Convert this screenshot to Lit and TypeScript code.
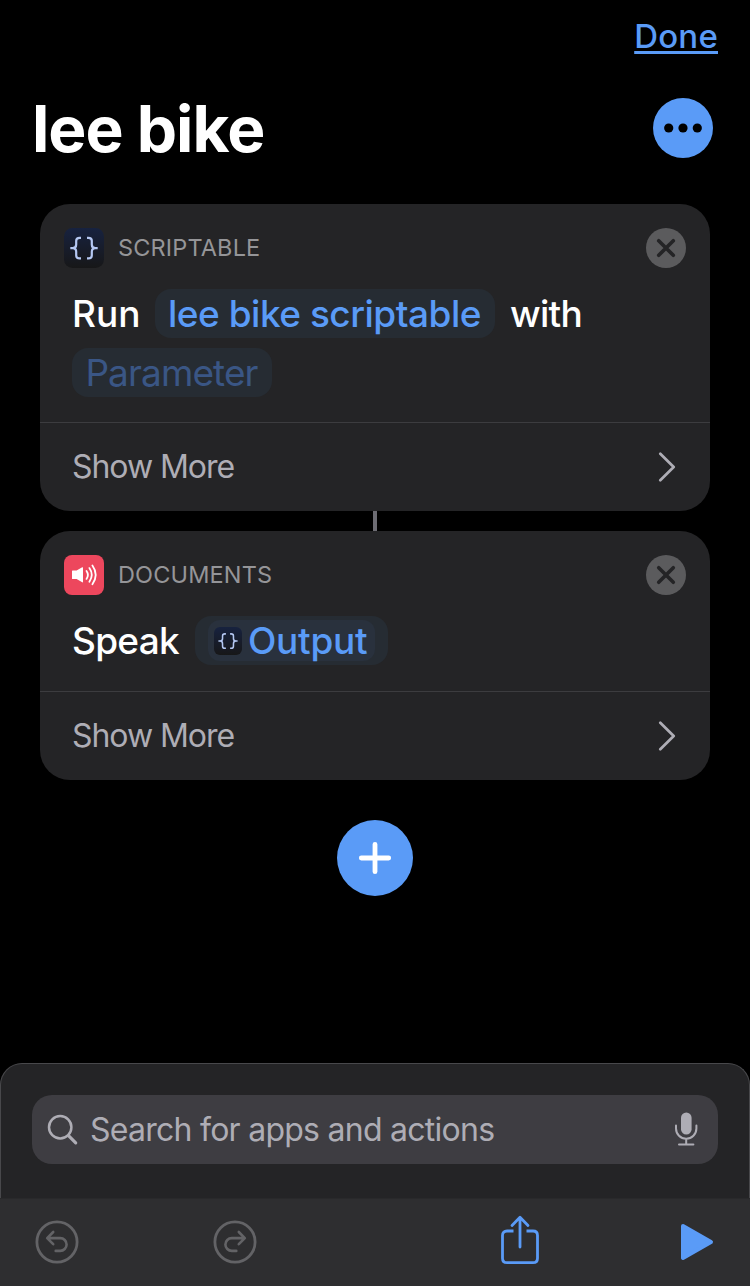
import { LitElement, html, css, svg } from "lit";
import { customElement, property } from "lit/decorators.js";

const bracesIcon = html`<svg class="fill" viewBox="0 0 40 40">
  <defs>
    <linearGradient id="night" x1="0" y1="0" x2="0" y2="1">
      <stop offset="0" stop-color="#17223f" />
      <stop offset="1" stop-color="#171718" />
    </linearGradient>
  </defs>
  <rect width="40" height="40" rx="8.5" fill="url(#night)" />
  <g fill="none" stroke="#b4c7f2" stroke-width="2.2">
    <path d="M17 9.8H15.6Q12.2 9.8 12.2 12.8V16.6Q12.2 20.1 8.8 20.1H6.3H8.8Q12.2 20.1 12.2 23.8V27.4Q12.2 30.4 15.6 30.4H17" />
    <path d="M23 9.8H24.4Q27.8 9.8 27.8 12.8V16.6Q27.8 20.1 31.2 20.1H33.7H31.2Q27.8 20.1 27.8 23.8V27.4Q27.8 30.4 24.4 30.4H23" />
  </g>
</svg>`;

const speakerIcon = html`<svg class="fill" viewBox="0 0 40 40">
  <rect width="40" height="40" rx="8" fill="#ed475d" />
  <path d="M8.5 15.5H12.6L18.2 12.2Q19 11.9 19 12.8V26.8Q19 27.7 18.2 27.3L12.6 24H8.5Q8 24 8 23.5V16Q8 15.5 8.5 15.5Z" fill="#fff" />
  <g fill="none" stroke="#fff" stroke-width="1.8" stroke-linecap="round">
    <path d="M22.5 15.9Q25.3 19.8 22.5 23.9" />
    <path d="M25.4 13.1Q30.1 19.8 25.4 26.7" />
    <path d="M28.4 10.5Q35 19.8 28.4 29.3" />
  </g>
</svg>`;

@customElement("action-card")
class ActionCard extends LitElement {
  @property() label = "";

  static styles = css`
    :host { display: block; background: #242426; border-radius: 30px; }
    .head { display: flex; align-items: center; padding: 24px 24px 0; height: 40px; }
    .icon { width: 40px; height: 40px; margin-right: 14px; }
    .label { flex: 1; font-size: 23.5px; letter-spacing: 0.15px; line-height: 40px; color: #959598; }
    .close { width: 40px; height: 40px; display: block; }
    .more {
      display: flex; align-items: center; justify-content: space-between;
      border-top: 1px solid #3c3c3f; height: 88px; padding: 0 34px 0 32px;
      font-size: 32px; letter-spacing: -1.05px; color: #aeadb5;
    }
    .more span { line-height: 40px; }
    .chevron { width: 18px; height: 30px; display: block; }
  `;

  render() {
    return html`
      <div class="head">
        <div class="icon"><slot name="icon"></slot></div>
        <div class="label">${this.label}</div>
        <svg class="close" viewBox="0 0 40 40">
          <circle cx="20" cy="20" r="20" fill="#5b5b5d" />
          <path d="M12.7 12.7L27.3 27.3M27.3 12.7L12.7 27.3" stroke="#242426" stroke-width="3.6" stroke-linecap="round" />
        </svg>
      </div>
      <slot></slot>
      <div class="more">
        <span>Show More</span>
        <svg class="chevron" viewBox="0 0 18 30">
          <path d="M2.3 1.7L15.7 15L2.3 28.3" fill="none" stroke="#aeadb5" stroke-width="2.7" stroke-linecap="round" stroke-linejoin="round" />
        </svg>
      </div>
    `;
  }
}

const turnArrow = svg`
  <circle cx="22" cy="22" r="20.1" stroke-width="2.8" />
  <path d="M18.2 12L12.2 18.1L18.2 24.2M12.5 18.1H25.2A6.4 6.4 0 0 1 25.2 30.9H20.7" stroke-width="2.6" />`;

@customElement("app-root")
class AppRoot extends LitElement {
  static styles = css`
    :host {
      display: flex; flex-direction: column; box-sizing: border-box;
      width: 750px; height: 1286px; overflow: hidden; background: #000; color: #fff;
      font-family: Inter, "Liberation Sans", sans-serif;
    }
    svg { display: block; }
    .fill { width: 100%; height: 100%; }
    .nav { display: flex; justify-content: flex-end; height: 72px; padding-right: 32px; }
    .done {
      height: 54px; margin-top: 18px; line-height: 36px; font-size: 33px; font-weight: 500;
      letter-spacing: 0.2px; color: #5a9bf7; text-decoration: underline;
      text-decoration-thickness: 3px; text-underline-offset: 3px; text-decoration-skip-ink: none;
    }
    .title-row { display: flex; align-items: center; justify-content: space-between; height: 112px; padding: 0 37px 20px 32px; }
    .title { margin: 0; padding-top: 2px; font-size: 64px; line-height: 80px; font-weight: 700; letter-spacing: -1px; }
    .dots { width: 60px; height: 60px; }
    .flow { display: flex; flex-direction: column; align-items: stretch; padding: 0 40px; flex: 1; }
    .link { width: 4px; height: 20px; background: #6d6c73; align-self: center; }
    .line { display: flex; align-items: center; height: 49px; font-size: 37px; font-weight: 500; letter-spacing: -0.48px; white-space: nowrap; padding-left: 32px; }
    .line.first { margin-top: 21px; }
    .line.second { margin-top: 10px; }
    .line.last { margin-bottom: 25px; }
    .line.only { margin-bottom: 26px; }
    .run { width: 83px; letter-spacing: 0; }
    .speak { width: 123px; letter-spacing: -0.7px; }
    .with { letter-spacing: -0.7px; }
    .pill {
      display: flex; align-items: center; justify-content: center; box-sizing: border-box;
      height: 49px; border-radius: 16px; background: #262c33; color: #5a9bf7;
    }
    .script { width: 340px; margin-right: 15px; padding-right: 1px; }
    .param { width: 200px; padding-right: 1px; color: #3a5685; font-weight: 400; letter-spacing: -0.9px; }
    .output { width: 193px; letter-spacing: -0.25px; }
    .token { display: flex; align-items: center; box-sizing: border-box; width: 167px; height: 41px; padding-left: 6px; border-radius: 12px; background: #29313d; }
    .mini { width: 28px; height: 28px; margin-right: 6px; }
    .add { width: 76px; height: 76px; margin-top: 40px; align-self: center; }
    .sheet { box-sizing: border-box; height: 135px; padding: 31px 31px 0; background: #242426; border: 1px solid #48484b; border-bottom: 0; border-radius: 22px 22px 0 0; }
    .search { display: flex; align-items: center; height: 69px; border-radius: 20px; background: #3e3d42; padding: 0 20px 0 15px; }
    .glass { width: 32px; height: 32px; margin-right: 11px; }
    .hint { flex: 1; padding-top: 1px; line-height: 40px; font-size: 32px; letter-spacing: -0.74px; color: #aeadb5; }
    .mic { width: 24px; height: 36px; margin-bottom: 1px; }
    .toolbar { display: flex; align-items: center; box-sizing: border-box; height: 88px; padding: 0 36px 2px 34px; background: #2e2e30; border-top: 1px solid #29292b; }
    .turn { width: 44px; height: 44px; fill: none; stroke: #636366; stroke-linecap: round; stroke-linejoin: round; }
    .turn:first-child { margin-left: 0.5px; }
    .redo { margin-left: 134px; }
    .share { width: 40px; height: 50px; margin: 0 0 3px 243px; }
    .play { width: 34px; height: 38px; margin-left: auto; }
  `;

  render() {
    return html`
      <div class="nav"><span class="done">Done</span></div>
      <div class="title-row">
        <h1 class="title">lee bike</h1>
        <svg class="dots" viewBox="0 0 60 60">
          <circle cx="30" cy="30" r="30" fill="#5a9bf7" />
          <circle cx="15.7" cy="30" r="4.6" /><circle cx="30" cy="30" r="4.6" /><circle cx="44.3" cy="30" r="4.6" />
        </svg>
      </div>
      <div class="flow">
        <action-card label="SCRIPTABLE">
          <div class="fill" slot="icon">${bracesIcon}</div>
          <div class="line first"><span class="run">Run</span><span class="pill script">lee bike scriptable</span><span class="with">with</span></div>
          <div class="line second last"><span class="pill param">Parameter</span></div>
        </action-card>
        <div class="link"></div>
        <action-card label="DOCUMENTS">
          <div class="fill" slot="icon">${speakerIcon}</div>
          <div class="line first only">
            <span class="speak">Speak</span>
            <span class="pill output"><span class="token"><span class="mini">${bracesIcon}</span>Output</span></span>
          </div>
        </action-card>
        <svg class="add" viewBox="0 0 76 76">
          <circle cx="38" cy="38" r="38" fill="#5a9bf7" />
          <path d="M24.3 38H51.7M38 24.3V51.7" stroke="#fff" stroke-width="4.8" stroke-linecap="round" />
        </svg>
      </div>
      <div class="sheet">
        <div class="search">
          <svg class="glass" viewBox="0 0 32 32" fill="none" stroke="#aeadb5" stroke-linecap="round">
            <circle cx="13.2" cy="13.3" r="11.2" stroke-width="2.5" />
            <path d="M21.5 21.7L28.7 28.9" stroke-width="3.2" />
          </svg>
          <span class="hint">Search for apps and actions</span>
          <svg class="mic" viewBox="0 0 24 36" fill="none" stroke="#aeadb5" stroke-width="2" stroke-linecap="round">
            <rect x="7" y="1.5" width="10.6" height="22" rx="5.3" fill="#aeadb5" stroke="none" />
            <path d="M2 14.5V17.5A10.200 10.200 0 0 0 22.400 17.5V14.5M12.2 27.8V33.4M5 33.6H19.4" />
          </svg>
        </div>
      </div>
      <div class="toolbar">
        <svg class="turn" viewBox="0 0 44 44">${turnArrow}</svg>
        <svg class="turn redo" viewBox="0 0 44 44"><g transform="matrix(-1 0 0 1 44 0)">${turnArrow}</g></svg>
        <svg class="share" viewBox="0 0 40 50" fill="none" stroke="#5a9bf7" stroke-width="2.8" stroke-linecap="butt" stroke-linejoin="round">
          <path d="M13.5 16H7Q2.500 16 2.500 20.5V43.2Q2.500 47.700 7 47.700H33Q37.500 47.700 37.500 43.200V20.500Q37.500 16 33 16H26.500" />
          <path d="M20 32V2.500M12 10.500L20 2.300L28 10.500" stroke-linecap="round" />
        </svg>
        <svg class="play" viewBox="0 0 34 38">
          <path d="M3 3L31 19L3 35Z" fill="#5a9bf7" stroke="#5a9bf7" stroke-width="4" stroke-linejoin="round" />
        </svg>
      </div>
    `;
  }
}
